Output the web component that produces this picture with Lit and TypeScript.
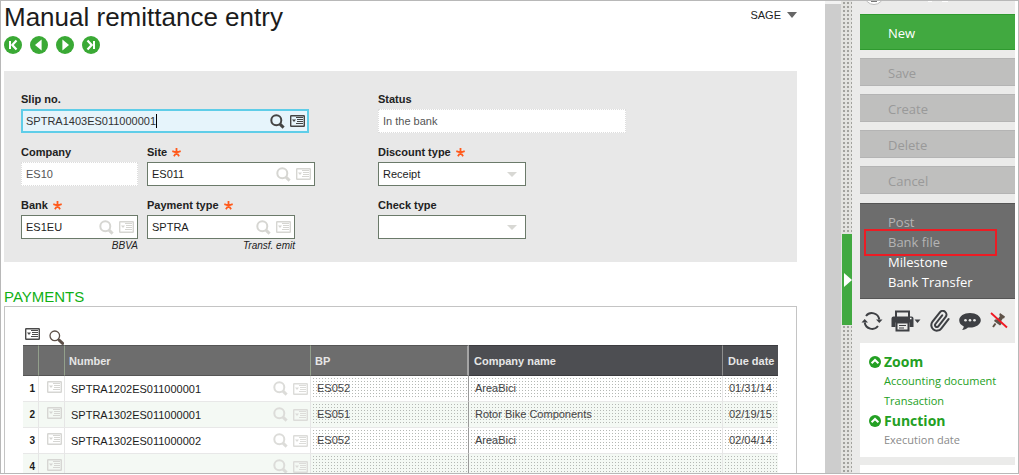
import { LitElement, html, css, svg, nothing } from "lit";
import { customElement, state } from "lit/decorators.js";
import { classMap } from "lit/directives/class-map.js";

interface Payment {
  number: string;
  bp: string;
  company: string;
  due: string;
}

interface Field {
  id: string;
  label: string;
  value: string;
  required?: boolean;
  active?: boolean;
  note?: string;
}

const PAYMENTS: Payment[] = [
  { number: "SPTRA1202ES011000001", bp: "ES052", company: "AreaBici", due: "01/31/14" },
  { number: "SPTRA1302ES011000001", bp: "ES051", company: "Rotor Bike Components", due: "02/19/15" },
  { number: "SPTRA1302ES011000002", bp: "ES052", company: "AreaBici", due: "02/04/14" },
  { number: "", bp: "", company: "", due: "" },
];

const searchIcon = html`<svg class="icon" width="15" height="15" viewBox="0 0 15 15" aria-hidden="true">
  <circle cx="6.3" cy="6.3" r="5" fill="none" stroke="currentColor" stroke-width="2" />
  <path d="M10 10.2l3.6 3.4" stroke="currentColor" stroke-width="3" fill="none" />
</svg>`;

const magnifierIcon = html`<svg class="icon" width="15" height="15" viewBox="0 0 15 15" aria-hidden="true">
  <circle cx="5.8" cy="5.8" r="4.8" fill="none" stroke="currentColor" stroke-width="1.3" />
  <path d="M9 9.2l1.6 1.6" stroke="currentColor" stroke-width="1.5" />
  <path d="M10.4 10.4l3.2 3" stroke="currentColor" stroke-width="3" stroke-linecap="round" />
</svg>`;

const listIcon = html`<svg class="icon" width="15" height="12" viewBox="0 0 15 12" aria-hidden="true">
  <rect x="0.7" y="0.7" width="13.6" height="10.6" rx="0.5" fill="none" stroke="currentColor" stroke-width="1.4" />
  <path d="M2 4.500h4L4 7z" fill="currentColor" />
  <path d="M6 2.500h7M7 4.500h6M7 6.500h6M6 8.500h7" stroke="currentColor" stroke-width="1.2" />
</svg>`;

const NAV = [
  { name: "First", path: svg`<path d="M6 5v8" stroke="#fff" stroke-width="2"/><path d="M12.500 4.500L8.300 9l4.200 4.500" fill="none" stroke="#fff" stroke-width="2.200"/>` },
  { name: "Previous", path: svg`<path d="M11.600 3.500v11L5 9z" fill="#fff"/>` },
  { name: "Next", path: svg`<path d="M6.400 3.500v11L13 9z" fill="#fff"/>` },
  { name: "Last", path: svg`<path d="M12 5v8" stroke="#fff" stroke-width="2"/><path d="M5.500 4.500L9.700 9l-4.200 4.500" fill="none" stroke="#fff" stroke-width="2.200"/>` },
];

const TOOLS = [
  {
    name: "Refresh", width: 22,
    icon: svg`<path d="M5 6A7.500 7.500 0 0 1 18.300 9.500M17 16A7.500 7.500 0 0 1 3.700 12.500" fill="none" stroke="currentColor" stroke-width="2"/>
      <path d="M15 9.500h6.500L18.300 13zM.5 12.500H7L3.700 9z" fill="currentColor"/>`,
  },
  {
    name: "Print", width: 30,
    icon: svg`<path d="M5 7.500V1.500h13v6" fill="none" stroke="currentColor" stroke-width="2"/>
      <path d="M2.500 6.500h18a2 2 0 0 1 2 2V17h-4v-4.500H4.500V17h-4V8.500a2 2 0 0 1 2-2z" fill="currentColor"/>
      <path d="M5.500 12.500h12v8h-12z" fill="#ebebea" stroke="currentColor" stroke-width="2"/>
      <path d="M8 15.500h7M8 18h5" stroke="currentColor" stroke-width="1.200"/>
      <path d="M19 8.500h1.500" stroke="#fff" stroke-width="1.300"/>
      <path d="M23.500 9.500h6l-3 3.500z" fill="currentColor"/>`,
  },
  {
    name: "Attachments", width: 22,
    icon: svg`<g transform="rotate(-7 11 11) scale(.92)"><path d="M21.440 11.050l-9.190 9.190a6 6 0 0 1-8.490-8.490l9.190-9.190a4 4 0 0 1 5.660 5.660l-9.200 9.190a2 2 0 0 1-2.830-2.830l8.490-8.480" fill="none" stroke="currentColor" stroke-width="2.200" stroke-linecap="round"/></g>`,
  },
  {
    name: "Comments", width: 24,
    icon: svg`<path d="M12 3c6 0 10.800 3.100 10.800 7.300 0 4.100-4.800 7.300-10.800 7.300l-2-.1c-1.700 1.500-3.500 2.200-6 2.400 1-1 1.600-2 1.800-3.400C3 15.200 1.200 13 1.200 10.300 1.200 6.100 6 3 12 3z" fill="currentColor"/>
      <g fill="#ebebea"><circle cx="7.500" cy="10.300" r="1.300"/><circle cx="12" cy="10.300" r="1.300"/><circle cx="16.500" cy="10.300" r="1.300"/></g>`,
  },
  {
    name: "Unpin", width: 18,
    icon: svg`<path d="M10 3l5 3.500-1 2-1-.3-2 3 .5 2.800-1.500 1.500-6-4.500 1-1.500 2.700-.3L10 6l-.8-1z" fill="#5f5349"/>
      <path d="M5.500 13.500L3 17" stroke="#5f5349" stroke-width="2"/>
      <path d="M1 3l16 14.500" stroke="#f01822" stroke-width="1.800"/>`,
  },
];

@customElement("app-root")
export class AppRoot extends LitElement {
  @state() private slip = "SPTRA1403ES011000001";

  static styles = css`
    :host {
      display: block;
      height: 100vh;
      box-sizing: border-box;
      padding-bottom: 1px;
      overflow: hidden;
      background: #fff;
      color: #222;
      font: 11px/14px "Liberation Sans", Arial, sans-serif;
    }
    * { box-sizing: border-box; }
    button, input, select { font: inherit; color: inherit; margin: 0; padding: 0; border: 0; background: none; border-radius: 0; }
    button { cursor: pointer; }
    .icon { display: block; }

    .frame { display: flex; height: 100%; border: 1px solid #b8b8b8; overflow: hidden; }
    .main { flex: 1; min-width: 0; padding: 0 28px 0 3px; }
    .top { display: flex; justify-content: space-between; align-items: flex-start; }
    h1 { margin: 0; font-size: 26px; line-height: 32px; font-weight: 400; color: #1c1c1c; }
    .user { display: flex; align-items: center; gap: 6px; padding-top: 7px; }
    .user svg { display: block; }
    .nav { display: flex; gap: 8px; padding: 3px 0 17px; }
    .nav svg { display: block; }

    .panel { display: grid; grid-template-columns: 357px minmax(0, 1fr); background: #e8e8e8; padding: 21px 17px 9px; }
    .group { display: flex; flex-direction: column; gap: 12px; }
    .line { display: flex; gap: 9px; }
    .field { display: flex; flex-direction: column; }
    .label { display: flex; gap: 5px; align-items: center; height: 17px; padding-bottom: 3px; font-weight: 700; white-space: nowrap; }
    .box { display: flex; align-items: center; gap: 5px; height: 24px; padding: 0 3px 0 4px; background: #fff; border: 1px solid #6b7a6a; color: #d6d6d2; }
    .box input, .text { color: #1c1c1c; }
    .box input { flex: 1; min-width: 0; }
    .box.active { border: 2px solid #5fcde8; background: #e6f4fb; color: #444; padding: 0 2px 0 3px; }
    .box.active input { flex: none; field-sizing: content; height: 14px; border-right: 1px solid #000; outline: 0; color: #333; }
    .push { flex: 1; }
    .readonly { height: 24px; background: #fff; border: 1px dotted #ddd; padding: 0 4px; color: #555; width: 100%; }
    .combo { display: grid; align-items: center; height: 24px; background: #fff; border: 1px solid #6b7a6a; }
    .combo > * { grid-area: 1 / 1; }
    .combo select { appearance: none; width: 100%; height: 22px; padding: 0 4px; color: #1c1c1c; }
    .combo svg { justify-self: end; margin-right: 8px; pointer-events: none; }
    .note { font-size: 10px; line-height: 14px; font-style: italic; text-align: right; height: 14px; }
    .w-slip { width: 288px; }
    .w-small { width: 117px; }
    .w-site { width: 168px; }
    .w-medium { width: 148px; }
    .w-status { width: 248px; max-width: 100%; }

    h2 { margin: 0; padding-top: 26px; font-size: 15px; line-height: 18px; font-weight: 400; color: #10b014; }
    .sheet { border: 1px solid #c4c4c4; border-bottom: 0; padding: 20px 18px 0; height: 200px; }
    .tools { display: flex; align-items: flex-start; gap: 9px; height: 18px; color: #4a4a4a; }
    .tools .find { padding-top: 3px; color: #5d5048; }
    .tools .list { padding: 1px 0 0 2px; }
    table { width: 100%; table-layout: fixed; border-collapse: separate; border-spacing: 0; }
    th { height: 31px; padding: 0 4px; text-align: left; background: #6d6d6d; color: #e6e6e6; border-top: 1px solid #555; border-bottom: 1px solid #555; border-right: 1px solid #93a08c; white-space: nowrap; }
    th.dark { background: #4d4e52; border-color: #3c3c40; border-right-color: #8e8e8e; padding-left: 5px; }
    th.edge { border-right: 2px solid #a5a5a5; }
    th:last-child { border-right: 0; }
    td { height: 26px; padding: 0 2px 0 6px; border-right: 1px solid #e6e6e6; border-bottom: 1px solid #e8e8e8; color: #1c1c1c; white-space: nowrap; }
    td:last-child { border-right: 0; }
    tbody tr:nth-child(even) { background: #f4f9f4; }
    td.rank { font-size: 10px; font-weight: 700; text-align: right; padding: 0 3px 0 0; }
    td.edge { border-right: 1px solid #9a9a9a; }
    td.dots { color: #444; padding: 1px 0 4px 1px; }
    .dots > span { display: block; height: 20px; line-height: 22px; padding-left: 5px; background: conic-gradient(at 1px 1px, transparent 75%, #b4b8b4 0) 1px 1px / 3px 3px; }
    .cell { display: flex; align-items: center; gap: 5px; color: #dcdcd9; }
    .cell > :first-child { flex: 1; }
    td.ghost { color: #d6d6d3; padding: 0 0 3px 8px; }
    .ghost button { display: block; }

    .scroll { width: 16px; background: #cdcdcd; border-top: 3px solid #f2f2f2; }
    .splitter { width: 11px; display: flex; flex-direction: column; padding: 233px 0 0 1px; background: conic-gradient(at 2px 2px, transparent 75%, #a2a29e 0) 2px 1px / 4px 4px #e3e3e0; }
    .splitter button { height: 91px; background: #41a940; display: flex; align-items: center; justify-content: flex-end; }

    aside { width: 163px; padding-left: 8px; background: #ebebea; margin-right: 3px; font-family: "Open Sans", "Noto Sans", sans-serif; overflow: hidden; }
    .peek { height: 13px; overflow: hidden; padding-left: 4px; display: flex; align-items: flex-start; }
    .actions { display: flex; flex-direction: column; gap: 8px; }
    .actions button { height: 28px; padding: 2px 0 0 28px; text-align: left; font-size: 13px; background: #bfbfbe; color: #999; border-top: 1px solid #b4b4b4; border-bottom: 1px solid #b4b4b4; }
    .actions button.primary { height: 36px; background: #41a940; color: #fff; border-color: #2f9a2f; }
    .menu { margin-top: 9px; padding: 8px 0 6px 28px; background: #6d6d6d; border-top: 1px solid #555; border-bottom: 1px solid #555; }
    .menu a { display: block; position: relative; font-size: 13px; line-height: 20px; color: #fff; text-decoration: none; }
    .menu a.off { color: #b4b4b4; }
    .mark { position: absolute; left: -24px; right: 18px; top: -3px; height: 27px; border: 2px solid #ec1c24; }
    .bar { display: flex; justify-content: space-between; align-items: center; height: 44px; padding: 0 7px 0 1px; color: #3e4044; }
    .bar svg { display: block; }
    .card { background: #fff; padding: 9px 8px 7px; margin-bottom: 8px; }
    .card h3 { display: flex; align-items: center; gap: 2px; margin: 0; font-size: 14px; line-height: 19px; color: #23a023; }
    .card a { display: block; padding-left: 16px; font-size: 11px; line-height: 20px; color: #23a023; text-decoration: none; white-space: nowrap; }
    .card a.off { color: #8a8a8a; }
    .blank { height: 40px; }
  `;

  private label(f: Field) {
    return html`<label class="label" for=${f.id}>${f.label}${f.required
      ? html`<svg width="9" height="9" viewBox="0 0 9 9" role="img" aria-label="required">
          <path d="M4.500 0v4.500M.3 3.200l4.200 1.300 4.200-1.300M4.500 4.500L1.900 8.300M4.500 4.500l2.600 3.800" fill="none" stroke="#ff5a1c" stroke-width="1.800" />
        </svg>`
      : nothing}</label>`;
  }

  private lookup(f: Field, width: string) {
    return html`<div class="field ${width}">
      ${this.label(f)}
      <div class=${classMap({ box: true, active: !!f.active })}>
        <input id=${f.id} .value=${f.value} @input=${(e: Event) => { if (f.active) this.slip = (e.target as HTMLInputElement).value; }} />
        ${f.active ? html`<span class="push"></span>` : nothing}
        <button aria-label="Search ${f.label}">${searchIcon}</button>
        <button aria-label="List ${f.label}">${listIcon}</button>
      </div>
      ${f.note ? html`<div class="note">${f.note}</div>` : nothing}
    </div>`;
  }

  private fixed(f: Field, width: string) {
    return html`<div class="field ${width}">
      ${this.label(f)}<input class="readonly" id=${f.id} .value=${f.value} readonly />
    </div>`;
  }

  private combo(f: Field) {
    return html`<div class="field w-medium">
      ${this.label(f)}
      <div class="combo">
        <select id=${f.id}><option>${f.value}</option></select>
        <svg width="10" height="5" viewBox="0 0 10 5"><path d="M0 0h10L5 5z" fill="#d8d8d4" /></svg>
      </div>
    </div>`;
  }

  private row(p: Payment, i: number) {
    return html`<tr>
      <td class="rank">${i + 1}</td>
      <td class="ghost"><button aria-label="Row ${i + 1} actions">${listIcon}</button></td>
      <td><div class="cell">
        <span class="text">${p.number}</span>
        <button aria-label="Search number">${searchIcon}</button>
        <button aria-label="List numbers">${listIcon}</button>
      </div></td>
      <td class="dots edge"><span>${p.bp}</span></td>
      <td class="dots"><span>${p.company}</span></td>
      <td class="dots"><span>${p.due}</span></td>
    </tr>`;
  }

  private heading(text: string) {
    return html`<h3><svg width="14" height="14" viewBox="0 0 14 14" aria-hidden="true">
      <circle cx="7" cy="7" r="6" fill="#23a023" />
      <path d="M3.600 8.300L7 5l3.400 3.300" fill="none" stroke="#fff" stroke-width="2" />
    </svg>${text}</h3>`;
  }

  render() {
    return html`<div class="frame">
      <main class="main">
        <header class="top">
          <h1>Manual remittance entry</h1>
          <button class="user">SAGE<svg width="10" height="6" viewBox="0 0 10 6"><path d="M0 0h10L5 6z" fill="#666" /></svg></button>
        </header>
        <nav class="nav">
          ${NAV.map((n) => html`<button aria-label=${n.name}><svg width="18" height="18" viewBox="0 0 18 18"><circle cx="9" cy="9" r="9" fill="#3aa935" />${n.path}</svg></button>`)}
        </nav>
        <section class="panel">
          <div class="group">
            <div class="line">${this.lookup({ id: "slip", label: "Slip no.", value: this.slip, active: true }, "w-slip")}</div>
            <div class="line">
              ${this.fixed({ id: "company", label: "Company", value: "ES10" }, "w-small")}
              ${this.lookup({ id: "site", label: "Site", value: "ES011", required: true }, "w-site")}
            </div>
            <div class="line">
              ${this.lookup({ id: "bank", label: "Bank", value: "ES1EU", required: true, note: "BBVA" }, "w-small")}
              ${this.lookup({ id: "payment", label: "Payment type", value: "SPTRA", required: true, note: "Transf. emit" }, "w-medium")}
            </div>
          </div>
          <div class="group">
            ${this.fixed({ id: "status", label: "Status", value: "In the bank" }, "w-status")}
            ${this.combo({ id: "discount", label: "Discount type", value: "Receipt", required: true })}
            ${this.combo({ id: "check", label: "Check type", value: "" })}
          </div>
        </section>
        <h2>PAYMENTS</h2>
        <section class="sheet">
          <div class="tools">
            <button class="list" aria-label="Table actions">${listIcon}</button>
            <button class="find" aria-label="Search in table">${magnifierIcon}</button>
          </div>
          <table>
            <colgroup>
              <col style="width:16px" /><col style="width:26px" /><col style="width:246px" />
              <col style="width:158px" /><col /><col style="width:55px" />
            </colgroup>
            <thead><tr>
              <th></th><th></th><th>Number</th><th class="edge">BP</th><th class="dark">Company name</th><th class="dark">Due date</th>
            </tr></thead>
            <tbody>${PAYMENTS.map((p, i) => this.row(p, i))}</tbody>
          </table>
        </section>
      </main>
      <div class="scroll"></div>
      <div class="splitter">
        <button aria-label="Collapse panel"><svg width="8" height="14" viewBox="0 0 8 14"><path d="M0 0v14l8-7z" fill="#fff" /></svg></button>
      </div>
      <aside>
        <div class="peek"><svg width="90" height="4" viewBox="0 0 90 4" aria-hidden="true">
          <circle cx="10" cy="-6" r="9.500" fill="#fff" stroke="#bbb" /><path d="M7 0h6v1H7z" fill="#777" />
          <path d="M64 0h4M78 0h6" stroke="#fff" stroke-width="2" />
        </svg></div>
        <div class="actions">
          <button class="primary">New</button>
          <button>Save</button><button>Create</button><button>Delete</button><button>Cancel</button>
        </div>
        <nav class="menu">
          <a class="off" href="#post">Post</a>
          <a class="off" href="#bank-file">Bank file<span class="mark"></span></a>
          <a href="#milestone">Milestone</a>
          <a href="#bank-transfer">Bank Transfer</a>
        </nav>
        <div class="bar">
          ${TOOLS.map((t) => html`<button aria-label=${t.name}><svg width=${t.width} height="22" viewBox="0 0 ${t.width} 22">${t.icon}</svg></button>`)}
        </div>
        <section class="card">
          ${this.heading("Zoom")}
          <a href="#accounting">Accounting document</a>
          <a href="#transaction">Transaction</a>
          ${this.heading("Function")}
          <a class="off" href="#execution">Execution date</a>
        </section>
        <section class="card blank"></section>
      </aside>
    </div>`;
  }
}
